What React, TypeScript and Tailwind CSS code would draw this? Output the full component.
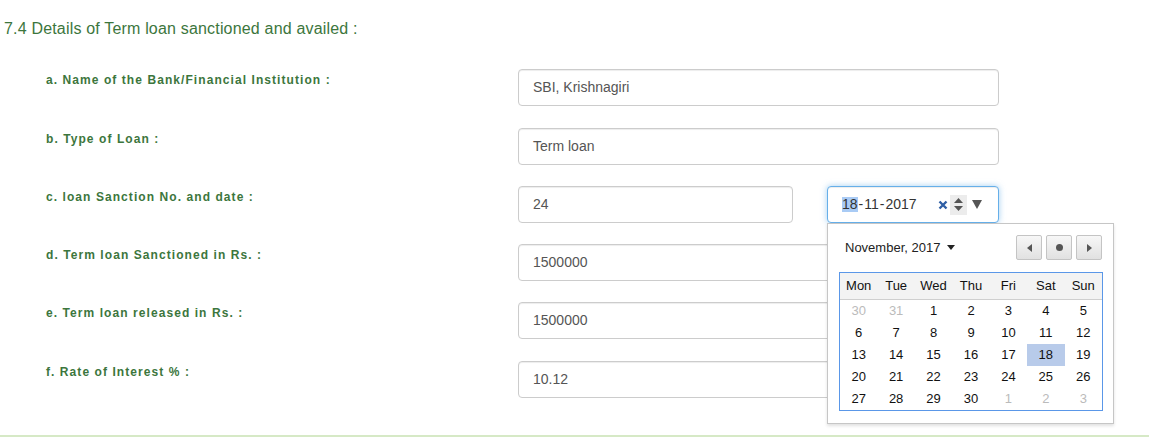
import React from "react";

const rows: { label: string; value: string; mb: string; date?: boolean }[] = [
  { label: "a. Name of the Bank/Financial Institution :", value: "SBI, Krishnagiri", mb: "mb-[22px]" },
  { label: "b. Type of Loan :", value: "Term loan", mb: "mb-[21px]" },
  { label: "c. loan Sanction No. and date :", value: "24", mb: "mb-[21px]", date: true },
  { label: "d. Term loan Sanctioned in Rs. :", value: "1500000", mb: "mb-[21px]" },
  { label: "e. Term loan released in Rs. :", value: "1500000", mb: "mb-[22px]" },
  { label: "f. Rate of Interest % :", value: "10.12", mb: "mb-0" },
];

const inputCls =
  "h-[37px] flex items-center pl-[14px] border border-[#cccccc] rounded-[4px] bg-white text-[14px] text-[#555555] shadow-[inset_0_1px_1px_rgba(0,0,0,0.075)]";

function DateInput() {
  return (
    <div className="ml-[34px] w-[172px] h-[37px] flex items-center pl-[14px] border border-[#66afe9] rounded-[4px] bg-white text-[14px] text-[#333333] shadow-[0_0_6px_rgba(102,175,233,0.6),inset_0_1px_1px_rgba(0,0,0,0.075)]">
      <span className="bg-[#a9cbf5] leading-[15px]">18</span>
      <span className="px-[1px]">-</span>
      <span>11</span>
      <span className="px-[1px]">-</span>
      <span>2017</span>
      <svg className="ml-[21px]" width="10" height="10" viewBox="0 0 10 10">
        <path d="M1.5 1.5 L8.5 8.5 M8.5 1.5 L1.5 8.5" stroke="#2f5fa5" strokeWidth="2.4" strokeLinecap="butt" />
      </svg>
      <div className="ml-[2px] w-[17px] h-[20px] bg-[#ececec] flex flex-col items-center justify-center gap-[3px]">
        <svg width="9" height="5" viewBox="0 0 9 5"><path d="M4.5 0 L9 5 L0 5 Z" fill="#555" /></svg>
        <svg width="9" height="5" viewBox="0 0 9 5"><path d="M0 0 L9 0 L4.5 5 Z" fill="#555" /></svg>
      </div>
      <svg className="ml-[5px]" width="10" height="9" viewBox="0 0 10 9">
        <path d="M0 0 L10 0 L5 9 Z" fill="#555" />
      </svg>
    </div>
  );
}

function NavButton({ children }: { children: React.ReactNode }) {
  return (
    <div className="w-[26px] h-[25px] rounded-[2px] border border-[#c4c4c4] bg-gradient-to-b from-[#f7f7f7] to-[#e1e1e1] flex items-center justify-center">
      {children}
    </div>
  );
}

const days: { d: number; muted?: boolean; sel?: boolean }[] = [
  { d: 30, muted: true }, { d: 31, muted: true }, { d: 1 }, { d: 2 }, { d: 3 }, { d: 4 }, { d: 5 },
  { d: 6 }, { d: 7 }, { d: 8 }, { d: 9 }, { d: 10 }, { d: 11 }, { d: 12 },
  { d: 13 }, { d: 14 }, { d: 15 }, { d: 16 }, { d: 17 }, { d: 18, sel: true }, { d: 19 },
  { d: 20 }, { d: 21 }, { d: 22 }, { d: 23 }, { d: 24 }, { d: 25 }, { d: 26 },
  { d: 27 }, { d: 28 }, { d: 29 }, { d: 30 }, { d: 1, muted: true }, { d: 2, muted: true }, { d: 3, muted: true },
];

function Calendar() {
  return (
    <div className="absolute left-[827px] top-[223px] w-[287px] h-[201px] bg-white border border-[#c6c6c6] shadow-[0_2px_3px_rgba(0,0,0,0.12)] px-[11px] pt-[11px]">
      <div className="flex items-center justify-between h-[25px]">
        <div className="pl-[6px] flex items-center text-[13px] text-[#222222]">
          <span>November, 2017</span>
          <svg className="ml-[7px]" width="8" height="5" viewBox="0 0 8 5"><path d="M0 0 L8 0 L4 5 Z" fill="#222" /></svg>
        </div>
        <div className="flex gap-[4px]">
          <NavButton>
            <svg width="5" height="8" viewBox="0 0 5 8"><path d="M5 0 L5 8 L0 4 Z" fill="#555" /></svg>
          </NavButton>
          <NavButton>
            <div className="w-[7px] h-[7px] rounded-full bg-[#555555]" />
          </NavButton>
          <NavButton>
            <svg width="5" height="8" viewBox="0 0 5 8"><path d="M0 0 L0 8 L5 4 Z" fill="#555" /></svg>
          </NavButton>
        </div>
      </div>
      <div className="mt-[12px] w-[264px] border border-[#5a97e8] text-[13px] text-[#111111]">
        <div className="grid grid-cols-7 h-[27px] bg-[#f3f3f3] border-b border-[#cfcfcf] items-center">
          {["Mon", "Tue", "Wed", "Thu", "Fri", "Sat", "Sun"].map((w) => (
            <div key={w} className="text-center">{w}</div>
          ))}
        </div>
        <div className="grid grid-cols-7">
          {days.map((x, i) => (
            <div
              key={i}
              className={
                "h-[22px] flex items-center justify-center " +
                (x.sel ? "bg-[#b8cbea] " : "") +
                (x.muted ? "text-[#bbbbbb]" : "")
              }
            >
              {x.d}
            </div>
          ))}
        </div>
      </div>
    </div>
  );
}

export default function App() {
  return (
    <div className="relative w-[1149px] h-[437px] bg-white overflow-hidden border-b-2 border-[#d6e9c6] font-['Liberation_Sans',Arial,sans-serif]">
      <div className="h-[69px] pt-[19px] pl-[4px]">
        <h3 className="text-[16px] leading-[19px] tracking-[0.18px] text-[#3c763d] font-normal">
          7.4 Details of Term loan sanctioned and availed :
        </h3>
      </div>
      {rows.map((r) => (
        <div key={r.label} className={"flex items-start " + r.mb}>
          <div className="w-[518px] pl-[46px] pt-[4px] text-[12px] leading-[14px] font-bold tracking-[1.07px] text-[#3c763d]">
            {r.label}
          </div>
          {r.date ? (
            <div className="flex">
              <div className={inputCls + " w-[275px]"}>{r.value}</div>
              <DateInput />
            </div>
          ) : (
            <div className={inputCls + " w-[481px]"}>{r.value}</div>
          )}
        </div>
      ))}
      <Calendar />
    </div>
  );
}
